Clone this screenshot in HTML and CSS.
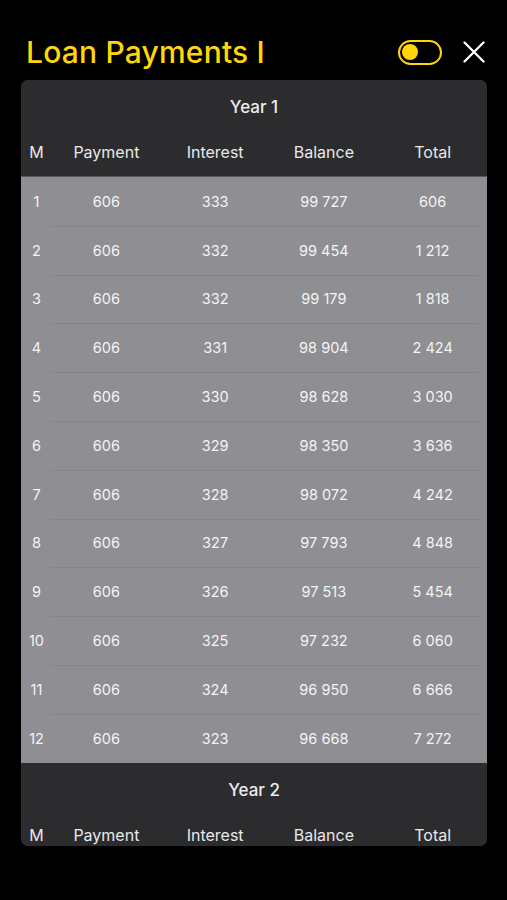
FILE: index.html
```html
<!DOCTYPE html>
<html>
<head>
  <meta charset="UTF-8">
  <meta name="viewport" content="width=device-width, initial-scale=1.0">
  <title>Loan Payments</title>
  <link rel="stylesheet" href="styles.css">
</head>
<body>
  <main>
    <header class="topbar">
      <h1 class="title">Loan Payments I</h1>
      <div class="actions">
        <span class="toggle"><span class="knob"></span></span>
        <svg class="close" width="22" height="22" viewBox="0 0 22 22">
          <path d="M1.5 1.5 L20.5 20.5 M20.5 1.5 L1.5 20.5" stroke="#fff" stroke-width="2.3" stroke-linecap="round" fill="none"/>
        </svg>
      </div>
    </header>

    <section class="card" id="card"></section>
  </main>

  <script>
    const card = document.querySelector('#card')

    const years = [
      {
        title: 'Year 1',
        rows: [
          [1, '606', '333', '99 727', '606'],
          [2, '606', '332', '99 454', '1 212'],
          [3, '606', '332', '99 179', '1 818'],
          [4, '606', '331', '98 904', '2 424'],
          [5, '606', '330', '98 628', '3 030'],
          [6, '606', '329', '98 350', '3 636'],
          [7, '606', '328', '98 072', '4 242'],
          [8, '606', '327', '97 793', '4 848'],
          [9, '606', '326', '97 513', '5 454'],
          [10, '606', '325', '97 232', '6 060'],
          [11, '606', '324', '96 950', '6 666'],
          [12, '606', '323', '96 668', '7 272']
        ]
      },
      { title: 'Year 2', rows: [] }
    ]

    const cells = values => values.map(v => `<span>${v}</span>`).join('')

    card.innerHTML = years.map(year => `
      <div class="year">
        <div class="year-head">
          <h2>${year.title}</h2>
          <div class="row cols">${cells(['M', 'Payment', 'Interest', 'Balance', 'Total'])}</div>
        </div>
        <div class="rows">
          ${year.rows.map(r => `<div class="row data">${cells(r)}</div>`).join('')}
        </div>
      </div>
    `).join('')
  </script>
</body>
</html>
```

FILE: styles.css
```css
* {
  box-sizing: border-box;
}

body {
  margin: 0;
  width: 507px;
  height: 900px;
  background-color: #000;
  font-family: Inter, "Liberation Sans", sans-serif;
  overflow: hidden;
}

main {
  display: flex;
  flex-direction: column;
  padding: 0 20px 0 21px;
  height: 100%;
}

.topbar {
  display: flex;
  align-items: center;
  justify-content: space-between;
  height: 80px;
  padding: 24px 2px 0 5px;
}

.title {
  margin: 0;
  color: #ffd60a;
  font-size: 30px;
  font-weight: 500;
  letter-spacing: 0.2px;
}

.actions {
  display: flex;
  align-items: center;
  gap: 21px;
}

.toggle {
  display: flex;
  align-items: center;
  width: 44px;
  height: 25px;
  border: 2.5px solid #ffd60a;
  border-radius: 13px;
  padding: 0 2px;
}

.knob {
  width: 16px;
  height: 16px;
  border-radius: 50%;
  background-color: #ffd60a;
}

.close {
  display: block;
}

.card {
  height: 766px;
  border-radius: 7px;
  overflow: hidden;
  background-color: #2c2c2e;
}

.year-head {
  background-color: #2c2c2e;
  border-bottom: 1px solid #5a5a5e;
}

.year-head h2 {
  margin: 0;
  height: 52px;
  padding-top: 17px;
  text-align: center;
  color: #ececec;
  font-size: 17px;
  font-weight: 500;
}

.row {
  display: grid;
  grid-template-columns: 31px repeat(4, 1fr);
  align-items: center;
  text-align: center;
}

.cols {
  height: 44px;
  padding-bottom: 4px;
  color: #e8e8e8;
  font-size: 16px;
}

.rows {
  background-color: #8e8e93;
}

.data {
  position: relative;
  height: 48.8px;
  color: #f4f4f4;
  font-size: 14.5px;
}

.data + .data::before {
  content: '';
  position: absolute;
  top: 0;
  left: 29px;
  right: 8px;
  height: 1px;
  background-color: #858589;
}
```
